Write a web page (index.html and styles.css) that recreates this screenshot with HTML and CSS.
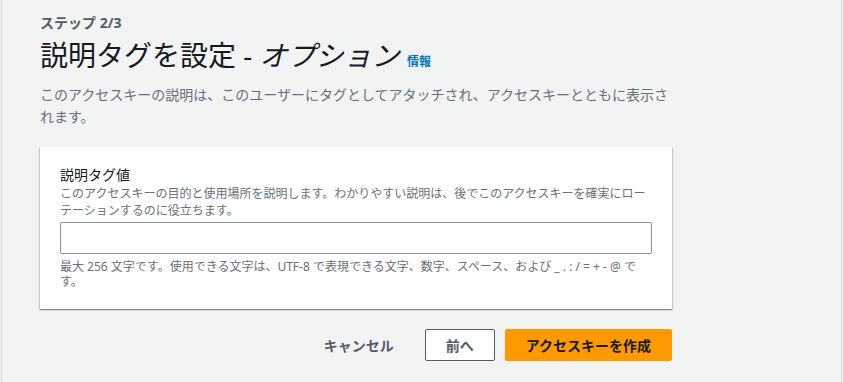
FILE: index.html
```html
<!DOCTYPE html>
<html lang="ja">
<head>
    <meta charset="UTF-8">
    <meta name="viewport" content="width=device-width, initial-scale=1.0">
    <title>説明タグを設定</title>
    <link rel="stylesheet" href="styles.css">
</head>
<body>
    <div class="page">
        <div class="main">
            <div class="step">ステップ 2/3</div>
            <h1 class="title">説明タグを設定 - <i>オプション</i> <a class="info" href="#">情報</a></h1>
            <p class="lead">このアクセスキーの説明は、このユーザーにタグとしてアタッチされ、アクセスキーとともに表示されます。</p>

            <div class="card">
                <label class="label" for="tag">説明タグ値</label>
                <div class="hint">このアクセスキーの目的と使用場所を説明します。わかりやすい説明は、後でこのアクセスキーを確実にローテーションするのに役立ちます。</div>
                <input class="input" id="tag" type="text">
                <div class="note">最大 256 文字です。使用できる文字は、UTF-8 で表現できる文字、数字、スペース、および _ . : / = + - @ です。</div>
            </div>

            <div class="actions">
                <button class="btn btn-link">キャンセル</button>
                <button class="btn btn-normal">前へ</button>
                <button class="btn btn-primary">アクセスキーを作成</button>
            </div>
        </div>
    </div>
</body>
</html>
```

FILE: styles.css
```css
html,body{
    margin: 0;padding: 0;
}
body{
    background: #f2f3f3;
    font-family: "Noto Sans", "Noto Sans CJK JP", sans-serif;
    color: #16191f;
}
.page{
    margin: 0 1px;height: 382px;box-sizing: border-box;
    border-left: 1px solid #d5dbdb;border-right: 1px solid #d5dbdb;
    padding: 13px 38px 0;
}
.main{
    width: 632px;
}
.step{
    font-size: 14px;line-height: 20px;font-weight: bold;color: #545b64;
}
.title{
    margin: 4px 0 0;font-size: 28px;line-height: 36px;font-weight: normal;color: #16191f;
}
.title i{
    font-style: italic;
}
.info{
    font-size: 12px;font-weight: bold;color: #0073bb;text-decoration: none;
}
.lead{
    margin: 4px 0 0;font-size: 14px;line-height: 22px;color: #687078;
}
.card{
    margin-top: 19px;background: #fff;padding: 18px 20px 20px;
    box-shadow: 0 1px 1px 0 rgba(0,28,36,0.3), 1px 1px 1px 0 rgba(0,28,36,0.15), -1px 1px 1px 0 rgba(0,28,36,0.15);
}
.label{
    display: block;font-size: 14px;line-height: 20px;color: #16191f;
}
.hint{
    font-size: 12px;line-height: 17px;color: #687078;
}
.input{
    display: block;box-sizing: border-box;width: 100%;height: 32px;margin-top: 3px;
    border: 1px solid #879596;border-radius: 2px;background: #fff;
}
.note{
    margin-top: 5px;font-size: 12px;line-height: 15px;color: #687078;
}
.actions{
    display: flex;justify-content: flex-end;gap: 10px;margin-top: 20px;
}
.btn{
    height: 32px;box-sizing: border-box;padding: 0 20px;border-radius: 2px;
    font-family: inherit;font-size: 14px;font-weight: bold;cursor: pointer;
}
.btn-link{
    background: transparent;border: 1px solid transparent;color: #545b64;
}
.btn-normal{
    background: #fff;border: 1px solid #545b64;color: #545b64;
}
.btn-primary{
    background: #ff9900;border: 1px solid #ff9900;color: #16191f;
}
```
